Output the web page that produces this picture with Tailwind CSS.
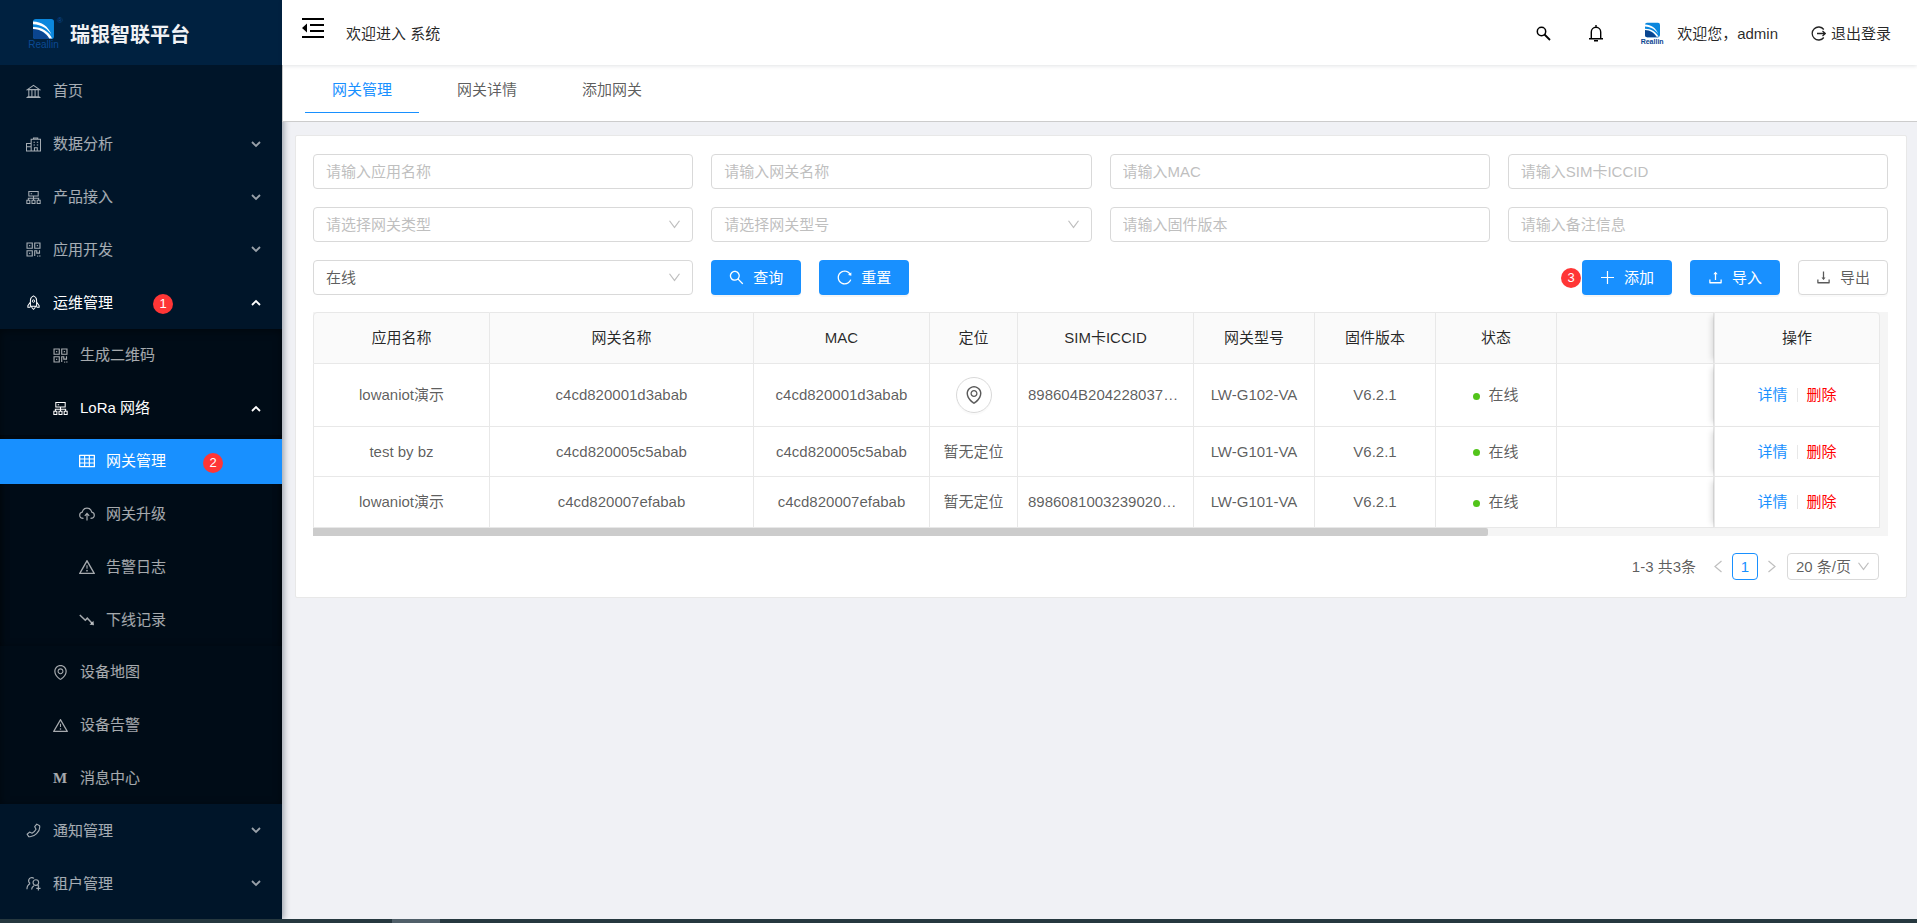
<!DOCTYPE html>
<html lang="zh-CN">
<head>
<meta charset="utf-8">
<title>瑞银智联平台</title>
<script src="https://cdn.jsdelivr.net/npm/@tailwindcss/browser@4"></script>
</head>
<body class="flex h-screen flex-col overflow-hidden bg-[#f0f1f5] font-['Liberation_Sans','Noto_Sans_CJK_SC',sans-serif] text-[15px] leading-6 text-black/65">
<svg class="hidden" aria-hidden="true">
  <symbol id="chev" viewBox="0 0 10 7"><path d="M1 1l4 4 4-4" fill="none" stroke="currentColor" stroke-width="1.800"/></symbol>
  <symbol id="down" viewBox="64 64 896 896"><path d="M884 256h-75c-5.100 0-9.900 2.500-12.900 6.600L512 654.200 227.900 262.600c-3-4.100-7.800-6.600-12.900-6.600h-75c-6.500 0-10.300 7.400-6.500 12.700l352.600 486.100c12.800 17.600 39 17.600 51.700 0l352.600-486.100c3.900-5.300.1-12.700-6.400-12.700z"/></symbol>
  <symbol id="search" viewBox="64 64 896 896"><path d="M909.6 854.5L649.9 594.8C690.2 542.7 712 479 712 412c0-80.200-31.300-155.400-87.900-212.100-56.600-56.700-132-87.900-212.100-87.900s-155.500 31.300-212.100 87.900C143.200 256.500 112 331.800 112 412c0 80.100 31.300 155.500 87.900 212.100C256.500 680.800 331.800 712 412 712c67 0 130.600-21.800 182.700-62l259.700 259.600a8.200 8.200 0 0 0 11.600 0l43.600-43.500a8.200 8.200 0 0 0 0-11.600zM570.400 570.400C528 612.700 471.800 636 412 636s-116-23.300-158.400-65.600C211.300 528 188 471.800 188 412s23.300-116.100 65.600-158.400C296 211.300 352.200 188 412 188s116.100 23.200 158.400 65.600S636 352.200 636 412s-23.300 116.100-65.600 158.400z"/></symbol>
  <symbol id="reload" viewBox="64 64 896 896"><path d="M909.1 209.300l-56.400 44.100C775.800 155.100 656.200 92 521.900 92 290 92 102.300 279.500 102 511.500 101.700 743.700 289.800 932 521.900 932c181.300 0 335.800-115 394.600-276.100 1.500-4.200-.7-8.900-4.900-10.300l-56.700-19.500a8 8 0 0 0-10.100 4.800c-1.800 5-3.800 10-5.900 14.900-17.300 41-42.100 77.800-73.700 109.400A344.770 344.770 0 0 1 655.900 829c-42.300 17.900-87.400 27-133.800 27-46.500 0-91.500-9.100-133.800-27A341.500 341.500 0 0 1 279 755.200a342.160 342.160 0 0 1-73.700-109.400c-17.900-42.400-27-87.400-27-133.900s9.100-91.500 27-133.900c17.300-41 42.100-77.800 73.700-109.400 31.600-31.600 68.400-56.400 109.300-73.800 42.300-17.900 87.400-27 133.800-27 46.500 0 91.500 9.100 133.800 27a341.500 341.500 0 0 1 109.300 73.800c9.900 9.900 19.200 20.400 27.800 31.400l-60.200 47a8 8 0 0 0 3 14.100l175.600 43c5 1.200 9.900-2.600 9.900-7.700l.8-180.900c-.1-6.600-7.800-10.300-13-6.200z"/></symbol>
  <symbol id="upload" viewBox="64 64 896 896"><path d="M400 317.700h73.900V656c0 4.400 3.600 8 8 8h60c4.400 0 8-3.600 8-8V317.700H624c6.700 0 10.400-7.700 6.300-12.900L518.300 163a8 8 0 0 0-12.600 0l-112 141.700c-4.100 5.300-.4 13 6.300 13zM878 626h-60c-4.400 0-8 3.600-8 8v154H214V634c0-4.400-3.600-8-8-8h-60c-4.400 0-8 3.600-8 8v198c0 17.700 14.300 32 32 32h684c17.700 0 32-14.300 32-32V634c0-4.400-3.600-8-8-8z"/></symbol>
  <symbol id="download" viewBox="64 64 896 896"><path d="M505.700 661a8 8 0 0 0 12.600 0l112-141.700c4.100-5.200.4-12.900-6.300-12.900h-74.100V168c0-4.400-3.600-8-8-8h-60c-4.400 0-8 3.600-8 8v338.300H400c-6.700 0-10.400 7.700-6.300 12.900l112 141.800zM878 626h-60c-4.400 0-8 3.600-8 8v154H214V634c0-4.400-3.600-8-8-8h-60c-4.400 0-8 3.600-8 8v198c0 17.700 14.300 32 32 32h684c17.700 0 32-14.300 32-32V634c0-4.400-3.600-8-8-8z"/></symbol>
  <symbol id="pin" viewBox="64 64 896 896"><path d="M854.600 289.100a362.490 362.490 0 0 0-79.900-115.700 370.830 370.830 0 0 0-118.200-77.800C610.700 76.600 562.100 67 512 67c-50.100 0-98.700 9.600-144.500 28.500-44.300 18.300-84 44.500-118.200 77.800A363.600 363.600 0 0 0 169.400 289c-19.500 45-29.400 92.800-29.400 142 0 70.600 16.900 140.900 50.100 208.700 26.700 54.500 64 107.600 111 158.100 80.300 86.200 164.500 138.900 188.400 153a43.900 43.900 0 0 0 22.400 6.100c7.800 0 15.500-2 22.400-6.100 23.900-14.100 108.100-66.800 188.400-153 47-50.400 84.300-103.600 111-158.100C867.100 572 884 501.800 884 431.100c0-49.200-9.900-97-29.400-142zM512 880.200c-65.900-41.900-300-207.800-300-449.100 0-77.900 31.100-151.100 87.600-206.300C356.300 169.500 431.700 139 512 139s155.700 30.500 212.400 85.900C780.900 280 812 353.200 812 431.100c0 241.300-234.100 407.200-300 449.100zm0-617.200c-97.200 0-176 78.800-176 176s78.800 176 176 176 176-78.800 176-176-78.800-176-176-176zm79.200 255.200A111.600 111.600 0 0 1 512 551c-29.900 0-58-11.700-79.200-32.800A111.600 111.600 0 0 1 400 439c0-29.900 11.700-58 32.800-79.200A111.600 111.600 0 0 1 512 327c29.900 0 58 11.600 79.200 32.800C612.400 381 624 409.100 624 439c0 29.900-11.600 58-32.800 79.200z"/></symbol>
  <symbol id="warn" viewBox="64 64 896 896"><path d="M464 720a48 48 0 1 0 96 0 48 48 0 1 0-96 0zm16-304v184c0 4.400 3.600 8 8 8h48c4.400 0 8-3.600 8-8V416c0-4.400-3.600-8-8-8h-48c-4.400 0-8 3.600-8 8zm475.700 440l-416-720c-6.200-10.700-16.900-16-27.700-16s-21.600 5.300-27.700 16l-416 720C56 877.400 71.400 904 96 904h832c24.600 0 40-26.600 27.700-48zm-783.500-27.900L512 239.900l339.800 588.200H172.200z"/></symbol>
  <symbol id="table" viewBox="64 64 896 896"><path d="M928 160H96c-17.700 0-32 14.300-32 32v640c0 17.700 14.300 32 32 32h832c17.700 0 32-14.300 32-32V192c0-17.700-14.300-32-32-32zm-40 208H676V232h212v136zm0 224H676V432h212v160zM412 432h200v160H412V432zm200-64H412V232h200v136zm-476 64h212v160H136V432zm0-200h212v136H136V232zm0 424h212v136H136V656zm276 0h200v136H412V656zm476 136H676V656h212v136z"/></symbol>
  <symbol id="bank" viewBox="0 0 16 16"><path d="M1.500 6L8 1.500 14.500 6zM3 6v8M6.300 6v8M9.700 6v8M13 6v8M.5 14.500h15M1.500 13.500h13" fill="none" stroke="currentColor" stroke-width="1.100"/></symbol>
  <symbol id="building" viewBox="0 0 16 16"><path d="M5.500 7V2.500h10v12.500H.5V7h5v8M.5 10.500h5M8 2.500V1h4.500v1.500M8 5.500h1.500M11.500 5.500H13M8 8.500h1.500M11.500 8.500H13M9 15v-3.500h3V15" fill="none" stroke="currentColor" stroke-width="1.100"/></symbol>
  <symbol id="cluster" viewBox="0 0 16 16"><path d="M3 1.500h10v5H3zM5 4h1.500M8 6.500V11M2.500 11V8.800h11V11M.9 11h3.200v3.500H.9zM6.400 11h3.200v3.500H6.400zM11.900 11h3.200v3.500h-3.200z" fill="none" stroke="currentColor" stroke-width="1.100"/></symbol>
  <symbol id="qr" viewBox="0 0 16 16"><path d="M1.100 1.100h5.600v5.600H1.100zM9.300 1.100h5.600v5.600H9.300zM1.100 9.300h5.600v5.600H1.100zM3.300 3.900h1.200M11.500 3.900h1.200M3.300 12.100h1.200M9.300 15V9.300h2.200v2.500h2.900V8.800M12 15h1M14 14.900h1.500" fill="none" stroke="currentColor" stroke-width="1.200"/></symbol>
  <symbol id="rocket" viewBox="0 0 16 16"><path d="M4.700 12V5.500C4.700 3.500 6.300 1.700 8 .9c1.700.8 3.300 2.600 3.300 4.600V12zM4.700 7.500L2 11.500V13h2.700M11.300 7.500L14 11.500V13h-2.700M6 12c0 1.700 1 2.700 2 3.300 1-.6 2-1.600 2-3.300" fill="none" stroke="currentColor" stroke-width="1.100"/><circle cx="8" cy="6.500" r="1.300" fill="none" stroke="currentColor"/></symbol>
  <symbol id="cloud" viewBox="0 0 16 16"><path d="M4.500 12.300C2.200 12.300.7 11 .7 9.200c0-1.500 1-2.700 2.500-3C3.800 3.800 5.700 2.200 8 2.200s4.200 1.600 4.800 4c1.500.3 2.500 1.500 2.500 3 0 1.800-1.500 3.100-3.800 3.100M8 14.500V8M5.800 9.800L8 7.400l2.200 2.400" fill="none" stroke="currentColor" stroke-width="1.200"/></symbol>
  <symbol id="fall" viewBox="0 0 16 16"><path d="M.8 3l5.500 5.300 2-2.100 5 5.200" fill="none" stroke="currentColor" stroke-width="1.500"/><path d="M15 13.300l-4.500-.5 4-4z"/></symbol>
  <symbol id="phone" viewBox="0 0 16 16"><path d="M11.500 1.200l3 1.700c.6 3-1 6.300-3.200 8.400-2.200 2.200-5.300 3.800-8.400 3.200L1.200 12l2.600-2.300 2.700 1.200c1.800-.9 3.200-2.400 4.200-4.200L9.300 3.900z" fill="none" stroke="currentColor" stroke-width="1.200" stroke-linejoin="round"/></symbol>
  <symbol id="team" viewBox="0 0 16 16"><path d="M4.500 8C2.500 9 1 11 1 14M4.500 8C3 7 2.500 5.500 3 4c.7-2.200 3.500-3 5.500-1.500M6 14.500c0-2 .8-3.300 2.500-4.200M12.500 10c.6.300 1 .7 1.400 1.200M11 13.200h4.500M13.200 11v4.500" fill="none" stroke="currentColor" stroke-width="1.200"/><circle cx="10.500" cy="7" r="3" fill="none" stroke="currentColor" stroke-width="1.200"/></symbol>
  <symbol id="mark" viewBox="0 0 22 21"><rect width="22" height="21" rx="3" fill="#0b87dd"/><path d="M0 10c6 0 12 3 16 11H3c-2 0-3-1-3-3z" fill="#0a4590"/><path d="M16 21c-2-4-4-7-7-9 5 2 9 5 11 9z" fill="#0a4590"/><path d="M0 8.500c9 0 17 5 20 12h-3C14 15 8 10.500 0 10.500z" fill="#fff"/><path d="M0 2.500c9 0 16 5 19.500 14C16 11 9 5.500 0 5.500z" fill="#fff"/></symbol>
</svg>

<div class="flex min-h-0 flex-1">
  <!-- Sidebar -->
  <aside class="relative flex w-[282px] shrink-0 flex-col bg-[#001529] text-white/65 shadow-[2px_0_6px_rgba(0,21,41,0.35)]">
    <div class="flex h-[65px] shrink-0 items-center gap-[11px] bg-[#002140] pt-1 pl-7">
      <div class="relative flex w-[31px] flex-col items-center">
        <svg class="h-[20px] w-[21px]"><use href="#mark"/></svg>
        <span class="text-[10px] leading-[12px] text-[#0b4a94]">Reallin</span>
        <span class="absolute -top-1 -right-1 text-[8px] leading-[12px] text-[#0b4a94]">®</span>
      </div>
      <h1 class="text-[20px] font-bold text-[#f0f2f5]">瑞银智联平台</h1>
    </div>
    <nav class="flex min-h-0 flex-1 flex-col pb-[9px]">
      <div class="flex flex-[5] flex-col">
        <a href="#" class="flex flex-1 items-center gap-3 pr-[21px] pl-[26px]"><svg class="size-[15px] fill-current"><use href="#bank"/></svg><span>首页</span></a>
        <a href="#" class="flex flex-1 items-center gap-3 pr-[21px] pl-[26px]"><svg class="size-[15px] fill-current"><use href="#building"/></svg><span class="flex-1">数据分析</span><svg class="h-[7px] w-[10px] text-white/60"><use href="#chev"/></svg></a>
        <a href="#" class="flex flex-1 items-center gap-3 pr-[21px] pl-[26px]"><svg class="size-[15px] fill-current"><use href="#cluster"/></svg><span class="flex-1">产品接入</span><svg class="h-[7px] w-[10px] text-white/60"><use href="#chev"/></svg></a>
        <a href="#" class="flex flex-1 items-center gap-3 pr-[21px] pl-[26px]"><svg class="size-[15px] fill-current"><use href="#qr"/></svg><span class="flex-1">应用开发</span><svg class="h-[7px] w-[10px] text-white/60"><use href="#chev"/></svg></a>
        <a href="#" class="relative flex flex-1 items-center gap-3 pr-[21px] pl-[26px] text-white"><svg class="size-[15px] fill-current"><use href="#rocket"/></svg><span class="flex-1">运维管理</span><svg class="h-[7px] w-[10px] rotate-180"><use href="#chev"/></svg><span class="absolute top-[18px] left-[153px] size-5 rounded-full bg-[#ff3636] text-center text-[13px] leading-5 text-white">1</span></a>
      </div>
      <div class="flex flex-[9] flex-col bg-[#000c17] shadow-[inset_0_2px_8px_rgba(0,0,0,0.45)]">
        <a href="#" class="flex flex-1 items-center gap-3 pl-[53px]"><svg class="size-[15px] fill-current"><use href="#qr"/></svg><span>生成二维码</span></a>
        <a href="#" class="flex flex-1 items-center gap-3 pr-[21px] pl-[53px] text-white"><svg class="size-[15px] fill-current"><use href="#cluster"/></svg><span class="flex-1">LoRa 网络</span><svg class="h-[7px] w-[10px] rotate-180"><use href="#chev"/></svg></a>
        <div class="flex flex-[4] flex-col shadow-[inset_0_2px_8px_rgba(0,0,0,0.45)]">
          <div class="flex flex-1"><a href="#" class="relative my-1 flex flex-1 items-center gap-[11px] bg-[#1890ff] pl-[79px] text-white"><svg class="size-4 fill-current"><use href="#table"/></svg><span>网关管理</span><span class="absolute top-[14px] left-[203px] size-5 rounded-full bg-[#ff3636] text-center text-[13px] leading-5">2</span></a></div>
          <a href="#" class="flex flex-1 items-center gap-[11px] pl-[79px]"><svg class="size-4 fill-current"><use href="#cloud"/></svg><span>网关升级</span></a>
          <a href="#" class="flex flex-1 items-center gap-[11px] pl-[79px]"><svg class="size-4 fill-current"><use href="#warn"/></svg><span>告警日志</span></a>
          <a href="#" class="flex flex-1 items-center gap-[11px] pl-[79px]"><svg class="size-4 fill-current"><use href="#fall"/></svg><span>下线记录</span></a>
        </div>
        <a href="#" class="flex flex-1 items-center gap-3 pl-[53px]"><svg class="size-[15px] fill-current"><use href="#pin"/></svg><span>设备地图</span></a>
        <a href="#" class="flex flex-1 items-center gap-3 pl-[53px]"><svg class="size-[15px] fill-current"><use href="#warn"/></svg><span>设备告警</span></a>
        <a href="#" class="flex flex-1 items-center gap-3 pl-[53px]"><span class="w-[15px] font-['Liberation_Serif',serif] font-bold">M</span><span>消息中心</span></a>
      </div>
      <div class="flex flex-[2] flex-col">
        <a href="#" class="flex flex-1 items-center gap-3 pr-[21px] pl-[26px]"><svg class="size-[15px] fill-current"><use href="#phone"/></svg><span class="flex-1">通知管理</span><svg class="h-[7px] w-[10px] text-white/60"><use href="#chev"/></svg></a>
        <a href="#" class="flex flex-1 items-center gap-3 pr-[21px] pl-[26px]"><svg class="size-[15px] fill-current"><use href="#team"/></svg><span class="flex-1">租户管理</span><svg class="h-[7px] w-[10px] text-white/60"><use href="#chev"/></svg></a>
      </div>
    </nav>
  </aside>

  <div class="flex min-w-0 flex-1 flex-col">
    <header class="relative z-20 flex h-[65px] shrink-0 items-center bg-white pt-0.5 pr-[26px] pl-5 text-black/85 shadow-[0_1px_4px_rgba(0,21,41,0.12)]">
      <button type="button" aria-label="收起菜单" class="mr-[22px] self-start pt-4"><svg class="h-5 w-[22px] fill-black" viewBox="0 0 22 20"><path d="M0 0h22v2H0zM8 6h14v2H8zM8 12h14v2H8zM0 18h22v2H0zM5 5.500v9L0 10z"/></svg></button>
      <span class="flex-1">欢迎进入 系统</span>
      <button type="button" aria-label="搜索" class="mr-[38px]"><svg class="size-[15px]" viewBox="0 0 15 15"><circle cx="5.500" cy="5.500" r="4.200" fill="none" stroke="#000" stroke-width="1.500"/><path d="M8.500 8.500l5.500 5.500" stroke="#000" stroke-width="1.800"/></svg></button>
      <button type="button" aria-label="通知" class="mr-[38px]"><svg class="h-[17px] w-[14px]" viewBox="0 0 14 17"><path d="M2.300 13.500V7c0-2.700 2-4.700 4.700-4.700s4.700 2 4.700 4.700v6.500M0 13.700h14M7 2.300V0M5 15.800h4" fill="none" stroke="#000" stroke-width="1.400"/></svg></button>
      <div class="flex items-center gap-[14px]">
        <div class="flex w-[22px] flex-col items-center"><svg class="h-4 w-[15px]"><use href="#mark"/></svg><span class="text-[7px] leading-[7px] font-bold text-[#0a4590]">Reallin</span></div>
        <span>欢迎您，admin</span>
      </div>
      <a href="#" class="ml-[33px] flex items-center gap-[5px]"><svg class="size-[15px]" viewBox="0 0 15 15"><path d="M12.800 3.500A6.500 6.500 0 1 0 12.800 11.500M6 7.500h8M11.500 5l2.800 2.500-2.800 2.500" fill="none" stroke="#222" stroke-width="1.300"/></svg>退出登录</a>
    </header>
    <div role="tablist" class="relative z-10 flex h-[57px] shrink-0 items-start gap-[11px] border-b border-l border-[#ccc] bg-white pl-[22px]">
      <button type="button" role="tab" aria-selected="true" class="h-12 w-[114px] border-b border-[#1890ff] pt-0.5 text-[#1890ff]">网关管理</button>
      <button type="button" role="tab" class="h-12 w-[114px] pt-0.5">网关详情</button>
      <button type="button" role="tab" class="h-12 w-[114px] pt-0.5">添加网关</button>
    </div>

    <main class="mt-[13px] mr-[10px] ml-[13px] rounded-[2px] border border-[#e8e8e8] bg-white pt-[18px] pr-[18px] pb-[17px] pl-[17px]">
      <form class="grid grid-cols-4 gap-[18px]">
        <input aria-label="应用名称" placeholder="请输入应用名称" class="h-[35px] w-full min-w-0 rounded-sm border border-[#d9d9d9] px-3 placeholder:text-[#bfbfbf]">
        <input aria-label="网关名称" placeholder="请输入网关名称" class="h-[35px] w-full min-w-0 rounded-sm border border-[#d9d9d9] px-3 placeholder:text-[#bfbfbf]">
        <input aria-label="MAC" placeholder="请输入MAC" class="h-[35px] w-full min-w-0 rounded-sm border border-[#d9d9d9] px-3 placeholder:text-[#bfbfbf]">
        <input aria-label="SIM卡ICCID" placeholder="请输入SIM卡ICCID" class="h-[35px] w-full min-w-0 rounded-sm border border-[#d9d9d9] px-3 placeholder:text-[#bfbfbf]">
        <div class="relative"><select aria-label="网关类型" class="h-[35px] w-full appearance-none rounded-sm border border-[#d9d9d9] bg-white px-3 text-[#bfbfbf]"><option>请选择网关类型</option></select><svg class="pointer-events-none absolute top-[11px] right-3 size-[13px] fill-[#bfbfbf]"><use href="#down"/></svg></div>
        <div class="relative"><select aria-label="网关型号" class="h-[35px] w-full appearance-none rounded-sm border border-[#d9d9d9] bg-white px-3 text-[#bfbfbf]"><option>请选择网关型号</option></select><svg class="pointer-events-none absolute top-[11px] right-3 size-[13px] fill-[#bfbfbf]"><use href="#down"/></svg></div>
        <input aria-label="固件版本" placeholder="请输入固件版本" class="h-[35px] w-full min-w-0 rounded-sm border border-[#d9d9d9] px-3 placeholder:text-[#bfbfbf]">
        <input aria-label="备注信息" placeholder="请输入备注信息" class="h-[35px] w-full min-w-0 rounded-sm border border-[#d9d9d9] px-3 placeholder:text-[#bfbfbf]">
        <div class="relative"><select aria-label="状态" class="h-[35px] w-full appearance-none rounded-sm border border-[#d9d9d9] bg-white px-3"><option>在线</option></select><svg class="pointer-events-none absolute top-[11px] right-3 size-[13px] fill-[#bfbfbf]"><use href="#down"/></svg></div>
        <div class="col-span-3 flex gap-[18px]">
          <button type="button" class="flex h-[35px] w-[90px] items-center justify-center gap-[9px] rounded-sm bg-[#1890ff] text-white shadow-[0_2px_0_rgba(0,0,0,0.04)]"><svg class="size-[15px] fill-current"><use href="#search"/></svg>查询</button>
          <button type="button" class="mr-auto flex h-[35px] w-[90px] items-center justify-center gap-[9px] rounded-sm bg-[#1890ff] text-white shadow-[0_2px_0_rgba(0,0,0,0.04)]"><svg class="size-[15px] fill-current"><use href="#reload"/></svg>重置</button>
          <div class="relative">
            <span class="absolute top-2 -left-[21px] size-5 rounded-full bg-[#ff3636] text-center text-[13px] leading-5 text-white">3</span>
            <button type="button" class="flex h-[35px] w-[90px] items-center justify-center gap-[9px] rounded-sm bg-[#1890ff] text-white shadow-[0_2px_0_rgba(0,0,0,0.04)]"><svg class="size-[15px]" viewBox="0 0 15 15"><path d="M7.500 1v13M1 7.500h13" stroke="currentColor" stroke-width="1.200"/></svg>添加</button>
          </div>
          <button type="button" class="flex h-[35px] w-[90px] items-center justify-center gap-[9px] rounded-sm bg-[#1890ff] text-white shadow-[0_2px_0_rgba(0,0,0,0.04)]"><svg class="size-[15px] fill-current"><use href="#upload"/></svg>导入</button>
          <button type="button" class="flex h-[35px] w-[90px] items-center justify-center gap-[9px] rounded-sm border border-[#d9d9d9] bg-white shadow-[0_2px_0_rgba(0,0,0,0.02)]"><svg class="size-[15px] fill-current"><use href="#download"/></svg>导出</button>
        </div>
      </form>

      <!-- Gateway table; the gutters hold the vertical and horizontal scroll tracks -->
      <div class="mt-[17px] bg-[#f5f5f5] pr-2">
        <table class="w-full table-fixed border-separate border-spacing-0 text-center [&_td]:border-r [&_td]:border-b [&_td]:border-[#e8e8e8] [&_td]:bg-white [&_td]:px-[10px] [&_th]:border-t [&_th]:border-r [&_th]:border-b [&_th]:border-[#e8e8e8] [&_th]:bg-[#fafafa] [&_th]:font-normal [&_th]:text-black/85">
          <colgroup><col class="w-[177px]"><col class="w-[264px]"><col class="w-[176px]"><col class="w-[88px]"><col class="w-[176px]"><col class="w-[121px]"><col class="w-[121px]"><col class="w-[121px]"><col><col class="w-[166px]"></colgroup>
          <thead>
            <tr class="h-[52px]"><th class="rounded-tl-sm border-l">应用名称</th><th>网关名称</th><th>MAC</th><th>定位</th><th>SIM卡ICCID</th><th>网关型号</th><th>固件版本</th><th>状态</th><th></th><th class="relative rounded-tr-sm border-l shadow-[-6px_0_6px_-4px_rgba(0,0,0,0.15)]">操作</th></tr>
          </thead>
          <tbody>
            <tr class="h-[63px]"><td class="border-l">lowaniot演示</td><td>c4cd820001d3abab</td><td>c4cd820001d3abab</td><td><button type="button" aria-label="查看定位" class="inline-flex size-9 items-center justify-center rounded-full border border-[#d9d9d9] align-middle shadow-[0_2px_0_rgba(0,0,0,0.02)]"><svg class="size-[18px] fill-current"><use href="#pin"/></svg></button></td><td class="truncate">898604B2042280370000</td><td>LW-G102-VA</td><td>V6.2.1</td><td><span class="mr-2 inline-block size-[7px] rounded-full bg-[#52c41a] align-middle"></span>在线</td><td></td><td class="relative border-l shadow-[-6px_0_6px_-4px_rgba(0,0,0,0.15)]"><div class="flex items-center justify-center gap-[9px]"><a href="#" class="text-[#1890ff]">详情</a><span class="h-[14px] w-px bg-[#e8e8e8]"></span><a href="#" class="text-[#ff0000]">删除</a></div></td></tr>
            <tr class="h-[50px]"><td class="border-l">test by bz</td><td>c4cd820005c5abab</td><td>c4cd820005c5abab</td><td>暂无定位</td><td></td><td>LW-G101-VA</td><td>V6.2.1</td><td><span class="mr-2 inline-block size-[7px] rounded-full bg-[#52c41a] align-middle"></span>在线</td><td></td><td class="relative border-l shadow-[-6px_0_6px_-4px_rgba(0,0,0,0.15)]"><div class="flex items-center justify-center gap-[9px]"><a href="#" class="text-[#1890ff]">详情</a><span class="h-[14px] w-px bg-[#e8e8e8]"></span><a href="#" class="text-[#ff0000]">删除</a></div></td></tr>
            <tr class="h-[51px]"><td class="border-l">lowaniot演示</td><td>c4cd820007efabab</td><td>c4cd820007efabab</td><td>暂无定位</td><td class="truncate">89860810032390200000</td><td>LW-G101-VA</td><td>V6.2.1</td><td><span class="mr-2 inline-block size-[7px] rounded-full bg-[#52c41a] align-middle"></span>在线</td><td></td><td class="relative border-l shadow-[-6px_0_6px_-4px_rgba(0,0,0,0.15)]"><div class="flex items-center justify-center gap-[9px]"><a href="#" class="text-[#1890ff]">详情</a><span class="h-[14px] w-px bg-[#e8e8e8]"></span><a href="#" class="text-[#ff0000]">删除</a></div></td></tr>
          </tbody>
        </table>
        <div class="h-2 w-3/4 rounded-r-[2px] bg-[#ccc]"></div>
      </div>

      <div class="mt-[17px] flex h-[27px] items-center justify-end pr-[9px]">
        <span class="mr-[18px]">1-3 共3条</span>
        <button type="button" aria-label="上一页"><svg class="h-[13px] w-2" viewBox="0 0 8 13"><path d="M7.500 1L1 6.500 7.500 12" fill="none" stroke="#bfbfbf" stroke-width="1.200"/></svg></button>
        <button type="button" class="mx-[10px] h-[27px] w-[26px] rounded-sm border border-[#1890ff] text-[#1890ff]">1</button>
        <button type="button" aria-label="下一页"><svg class="h-[13px] w-2" viewBox="0 0 8 13"><path d="M.5 1L7 6.500.5 12" fill="none" stroke="#bfbfbf" stroke-width="1.200"/></svg></button>
        <div class="relative ml-[11px]"><select aria-label="每页条数" class="block h-[27px] w-[92px] appearance-none rounded-sm border border-[#d9d9d9] bg-white pl-2"><option>20 条/页</option></select><svg class="pointer-events-none absolute top-[7px] right-[9px] size-[13px] fill-[#bfbfbf]"><use href="#down"/></svg></div>
      </div>
    </main>
  </div>
</div>
<div class="relative z-30 h-1 shrink-0 bg-[#26383f] pl-[392px]"><div class="h-1 w-12 bg-[#505f69]"></div></div>
</body>
</html>
